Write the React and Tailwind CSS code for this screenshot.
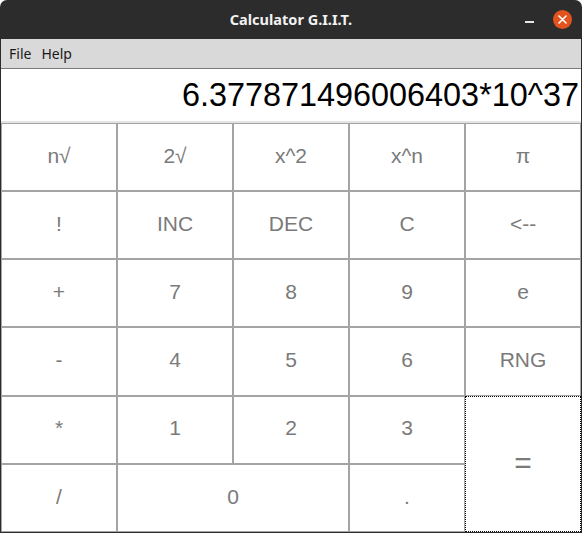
import React from 'react';

const keys = [
  { label: 'n√' },
  { label: '2√' },
  { label: 'x^2' },
  { label: 'x^n' },
  { label: 'π' },
  { label: '!' },
  { label: 'INC' },
  { label: 'DEC' },
  { label: 'C' },
  { label: '<--' },
  { label: '+' },
  { label: '7' },
  { label: '8' },
  { label: '9' },
  { label: 'e' },
  { label: '-' },
  { label: '4' },
  { label: '5' },
  { label: '6' },
  { label: 'RNG' },
  { label: '*' },
  { label: '1' },
  { label: '2' },
  { label: '3' },
  { label: '=', cls: 'row-span-2 border-dotted border-black text-[30px]' },
  { label: '/' },
  { label: '0', cls: 'col-span-2 text-[21px]' },
  { label: '.' },
];

export default function App() {
  return (
    <div className="w-[582px] h-[533px] bg-white">
      <div className="flex flex-col w-full h-full rounded-t-[7px] overflow-hidden bg-[#2c2c2c]">
        {/* title bar */}
        <div className="relative h-[39px] shrink-0 flex items-center justify-center">
          <span className="text-[14.5px] font-bold text-[#f2f2f2] font-['Noto_Sans',sans-serif]">
            Calculator G.I.I.T.
          </span>
          <div className="absolute left-[525px] top-[21px] w-[9px] h-[1.5px] bg-[#e6e6e6]" />
          <div className="absolute left-[553px] top-[10px] w-[19px] h-[19px] rounded-full bg-[#e2531f] flex items-center justify-center">
            <svg width="9" height="9" viewBox="0 0 9 9">
              <path d="M1 1L8 8M8 1L1 8" stroke="#fff" strokeWidth="1.6" strokeLinecap="round" />
            </svg>
          </div>
        </div>

        <div className="flex-1 flex flex-col mx-px mb-px bg-white">
          {/* menu */}
          <div className="h-[30px] shrink-0 bg-[#d9d9d9] flex items-center gap-[10px] px-[8px] text-[14px] text-[#1a1a1a] font-['Noto_Sans',sans-serif] border-b border-[#7a7a7a]">
            <span>File</span>
            <span>Help</span>
          </div>

          {/* display */}
          <div className="h-[52px] shrink-0 flex items-center justify-end pr-[2px] text-[32.4px] text-black font-['Liberation_Sans',Arial,sans-serif]">
            6.377871496006403*10^37
          </div>
          <div className="h-[2px] shrink-0 bg-[#e4e4e4]" />

          {/* keypad */}
          <div className="flex-1 grid grid-cols-5 grid-rows-6 font-['Liberation_Sans',Arial,sans-serif]">
            {keys.map((k) => (
              <button
                key={k.label}
                className={`flex items-center justify-center pb-[3px] bg-white border border-[#a4a4a4] text-[#7a7a7a] ${k.cls || 'text-[21px]'}`}
              >
                {k.label}
              </button>
            ))}
          </div>
        </div>
      </div>
    </div>
  );
}
